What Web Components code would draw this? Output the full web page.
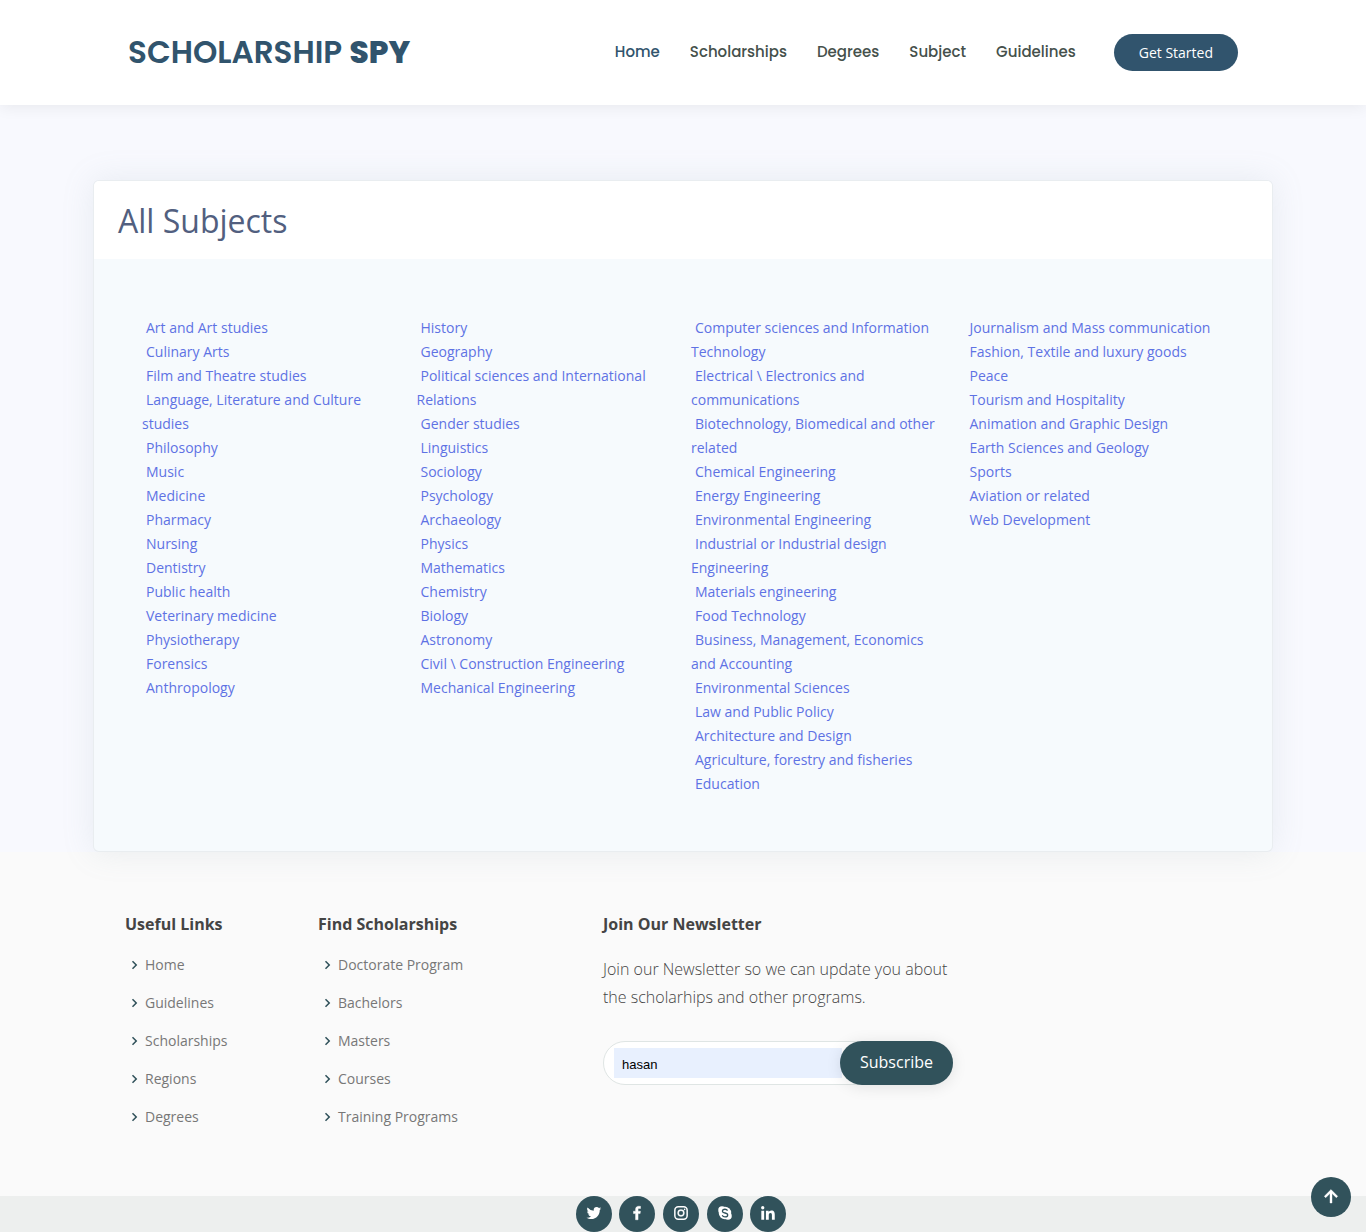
<!DOCTYPE html>
<html lang="en">
<head>
<meta charset="utf-8">
<meta name="viewport" content="width=device-width, initial-scale=1">
<title>Scholarship Spy - All Subjects</title>
<style>
body{margin:0;background:#f8f9fe;font-family:"Open Sans",sans-serif;font-size:14px;color:#444}
</style>
</head>
<body>
<site-header>
  <nav-link href="#home" active>Home</nav-link>
  <nav-link href="#scholarships">Scholarships</nav-link>
  <nav-link href="#degrees">Degrees</nav-link>
  <nav-link href="#subject">Subject</nav-link>
  <nav-link href="#guidelines">Guidelines</nav-link>
</site-header>
<subject-card><span slot="title">All Subjects</span></subject-card>
<site-footer>
  <link-list heading="Useful Links" items="Home|Guidelines|Scholarships|Regions|Degrees"></link-list>
  <link-list heading="Find Scholarships" items="Doctorate Program|Bachelors|Masters|Courses|Training Programs"></link-list>
  <news-letter>Join our Newsletter so we can update you about the scholarhips and other programs.</news-letter>
</site-footer>
<social-bar></social-bar>
<back-to-top></back-to-top>
<script>
const define = (name, html, setup) => customElements.define(name, class extends HTMLElement {
  constructor() {
    super();
    this.attachShadow({mode: 'open'});
  }
  connectedCallback() {
    this.shadowRoot.innerHTML = html;
    if (setup) setup(this, this.shadowRoot);
  }
});

define('nav-link', `
<style>
:host{display:block}
a{display:block;font:500 15px/24px Poppins,Inter,sans-serif;color:#45504b;text-decoration:none}
:host([active]) a{color:#31546d}
</style>
<a><slot></slot></a>`, (el, root) => { root.querySelector('a').href = el.getAttribute('href'); });

define('site-header', `
<style>
:host{display:block;position:relative;z-index:2;background:#fff;box-shadow:0 2px 15px rgba(0,0,0,.07)}
.bar{display:flex;align-items:center;max-width:1110px;height:105px;margin:0 auto}
h1{margin:0 auto 0 0;padding-bottom:2px;font:600 31px/36px Poppins,Inter,sans-serif}
h1 a{color:#31546d;text-decoration:none}
b{font-weight:800}
nav{display:flex;gap:30px;padding-bottom:2px}
button{margin-left:38px;padding:0 25px;height:37px;border:0;border-radius:50px;background:#31546d;color:#fff;font:400 14px/20px "Open Sans",sans-serif}
</style>
<div class="bar">
<h1><a href="#home">SCHOLARSHIP <b>SPY</b></a></h1>
<nav><slot></slot></nav>
<button type="button">Get Started</button>
</div>`);

const subjects = [
  ['Art and Art studies','Culinary Arts','Film and Theatre studies','Language, Literature and Culture studies','Philosophy','Music','Medicine','Pharmacy','Nursing','Dentistry','Public health','Veterinary medicine','Physiotherapy','Forensics','Anthropology'],
  ['History','Geography','Political sciences and International Relations','Gender studies','Linguistics','Sociology','Psychology','Archaeology','Physics','Mathematics','Chemistry','Biology','Astronomy','Civil \\ Construction Engineering','Mechanical Engineering'],
  ['Computer sciences and Information Technology','Electrical \\ Electronics and communications','Biotechnology, Biomedical and other related','Chemical Engineering','Energy Engineering','Environmental Engineering','Industrial or Industrial design Engineering','Materials engineering','Food Technology','Business, Management, Economics and Accounting','Environmental Sciences','Law and Public Policy','Architecture and Design','Agriculture, forestry and fisheries','Education'],
  ['Journalism and Mass communication','Fashion, Textile and luxury goods','Peace','Tourism and Hospitality','Animation and Graphic Design','Earth Sciences and Geology','Sports','Aviation or related','Web Development']
];
define('subject-card', `
<style>
:host{display:block;position:relative;z-index:1;padding-top:75px}
article{box-sizing:border-box;max-width:1180px;margin:0 auto;border:1px solid rgba(0,0,0,.05);border-radius:6px;background:#f6fafd;box-shadow:0 0 32px rgba(136,152,170,.15);overflow:hidden}
header{padding:21px 24px 19px;background:#fff}
h2{margin:0;font-weight:400;font-size:32px;line-height:38px;color:#525f7f}
.cols{display:grid;grid-template-columns:repeat(4,1fr);column-gap:28px;padding:57px 60px 55px 48px}
ul{margin:0;padding:0;list-style:none}
li{line-height:24px;text-indent:4px}
a{color:#5e72e4;text-decoration:none}
</style>
<article><header><h2><slot name="title"></slot></h2></header><div class="cols"></div></article>`, (el, root) => {
  root.querySelector('.cols').innerHTML = subjects.map(list =>
    '<ul>' + list.map(s => `<li><a href="#subject">${s}</a></li>`).join('') + '</ul>').join('');
});

define('site-footer', `
<style>
:host{display:block;background:#fafafa}
.row{display:grid;grid-template-columns:193px 285px 350px;max-width:1116px;margin:0 auto;padding:62px 0 60px}
</style>
<div class="row"><slot></slot></div>`);

define('link-list', `
<style>
:host{display:block}
h3{margin:0;font-size:16px;line-height:20px;font-weight:700;color:#444}
ul{margin:12px 0 0;padding:0;list-style:none}
li{display:flex;align-items:center;gap:2px;height:38px}
svg{width:18px;height:18px;fill:#31525b}
a{padding-bottom:2px;color:#777;text-decoration:none}
</style>
<h3></h3><ul></ul>`, (el, root) => {
  root.querySelector('h3').textContent = el.getAttribute('heading');
  root.querySelector('ul').innerHTML = el.getAttribute('items').split('|').map(t =>
    `<li><svg viewBox="0 0 24 24" aria-hidden="true"><path d="M10.707 17.707 16.414 12l-5.707-5.707-1.414 1.414L13.586 12l-4.293 4.293z"/></svg><a href="#">${t}</a></li>`).join('');
});

define('news-letter', `
<style>
:host{display:block}
h3{margin:0;font-size:16px;line-height:20px;font-weight:700;color:#444}
p{margin:21px 0 30px;font-size:16px;line-height:28px;font-weight:300}
form{display:flex;box-sizing:border-box;height:44px;border:1px solid #dfe5e4;border-radius:50px;background:#fff}
input{flex:1;min-width:0;box-sizing:border-box;height:30px;margin:6px -2px 0 10px;padding:2px 8px 0;border:0;border-radius:0;background:#e8f0fe;color:#000;font:13px/20px "Liberation Sans",sans-serif;outline:0}
button{position:relative;height:44px;margin:-1px -1px 0 0;padding:0 20px 2px;border:0;border-radius:50px;background:#31525b;color:#fff;font:400 16px/24px "Open Sans",sans-serif;box-shadow:0 2px 15px rgba(0,0,0,.1)}
</style>
<h3>Join Our Newsletter</h3>
<p><slot></slot></p>
<form><input type="text" name="email" value="hasan" aria-label="Email"><button type="button">Subscribe</button></form>`);

define('social-bar', `
<style>
:host{display:block;background:#edefee;text-align:center;font-size:14px;line-height:36px;height:36px}
a{display:inline-flex;box-sizing:border-box;align-items:center;justify-content:center;width:36px;height:36px;margin-right:4px;padding-bottom:2px;border-radius:50%;background:#31525b;color:#fff;vertical-align:top}
svg{width:18px;height:18px;fill:currentColor}
</style>
<a href="#" aria-label="Twitter"><svg viewBox="0 0 24 24"><path d="M19.633 7.997c.013.175.013.349.013.523 0 5.325-4.053 11.461-11.46 11.461-2.282 0-4.402-.661-6.186-1.809.324.037.636.05.973.05a8.07 8.07 0 0 0 5.001-1.721 4.036 4.036 0 0 1-3.767-2.793c.249.037.499.062.761.062.361 0 .724-.05 1.061-.137a4.027 4.027 0 0 1-3.23-3.953v-.05c.537.299 1.16.486 1.82.511a4.022 4.022 0 0 1-1.796-3.354c0-.748.199-1.434.548-2.032a11.457 11.457 0 0 0 8.306 4.215c-.062-.3-.1-.611-.1-.923a4.026 4.026 0 0 1 4.028-4.028c1.16 0 2.207.486 2.943 1.272a7.957 7.957 0 0 0 2.556-.973 4.02 4.02 0 0 1-1.771 2.22 8.073 8.073 0 0 0 2.319-.624 8.645 8.645 0 0 1-2.019 2.083z"/></svg></a>
<a href="#" aria-label="Facebook"><svg viewBox="0 0 24 24"><path d="M13.397 20.997v-8.196h2.765l.411-3.209h-3.176V7.548c0-.926.258-1.56 1.587-1.56h1.684V3.127A22.336 22.336 0 0 0 14.201 3c-2.444 0-4.122 1.492-4.122 4.231v2.355H7.332v3.209h2.753v8.202h3.312z" stroke="currentColor" stroke-width=".6"/></svg></a>
<a href="#" aria-label="Instagram"><svg viewBox="0 0 24 24"><path d="M11.999 7.377a4.623 4.623 0 1 0 0 9.248 4.623 4.623 0 0 0 0-9.248zm0 7.627a3.004 3.004 0 1 1 0-6.008 3.004 3.004 0 0 1 0 6.008z" stroke="currentColor" stroke-width=".4"/><circle cx="16.806" cy="7.207" r="1.078"/><rect x="3.8" y="3.8" width="16.4" height="16.4" rx="4.6" fill="none" stroke="currentColor" stroke-width="2"/></svg></a>
<a href="#" aria-label="Skype"><svg viewBox="0 0 24 24"><circle cx="12" cy="12" r="8.3"/><circle cx="8" cy="8" r="5"/><circle cx="16" cy="16" r="5"/><path d="M15.4 8.8C14.6 7.3 13.3 7 12 7c-2 0-3.4 1-3.4 2.5 0 3.6 7 1.4 7 5 0 1.6-1.5 2.6-3.6 2.6-1.600 0-3-.6-3.700-2.200" fill="none" stroke="#31525b" stroke-width="1.700"/></svg></a>
<a href="#" aria-label="LinkedIn"><svg viewBox="0 0 24 24"><circle cx="4.983" cy="5.009" r="2.188"/><path d="M9.237 8.855v12.139h3.769v-6.003c0-1.584.298-3.118 2.262-3.118 1.937 0 1.961 1.811 1.961 3.218v5.904H21v-6.657c0-3.27-.704-5.783-4.526-5.783-1.835 0-3.065 1.007-3.568 1.96h-.051v-1.66H9.237zm-6.142 0H6.87v12.139H3.095z"/></svg></a>`);

define('back-to-top', `
<style>
:host{position:fixed;right:15px;bottom:15px;z-index:3}
a{display:flex;align-items:center;justify-content:center;width:40px;height:40px;border-radius:50%;background:#31525b}
svg{width:24px;height:24px;fill:#fff}
</style>
<a href="#" aria-label="Back to top"><svg viewBox="0 0 24 24"><path d="M11 8.414V18h2V8.414l4.293 4.293 1.414-1.414L12 4.586l-6.707 6.707 1.414 1.414z" stroke="#fff" stroke-width=".4"/></svg></a>`);
</script>
</body>
</html>
